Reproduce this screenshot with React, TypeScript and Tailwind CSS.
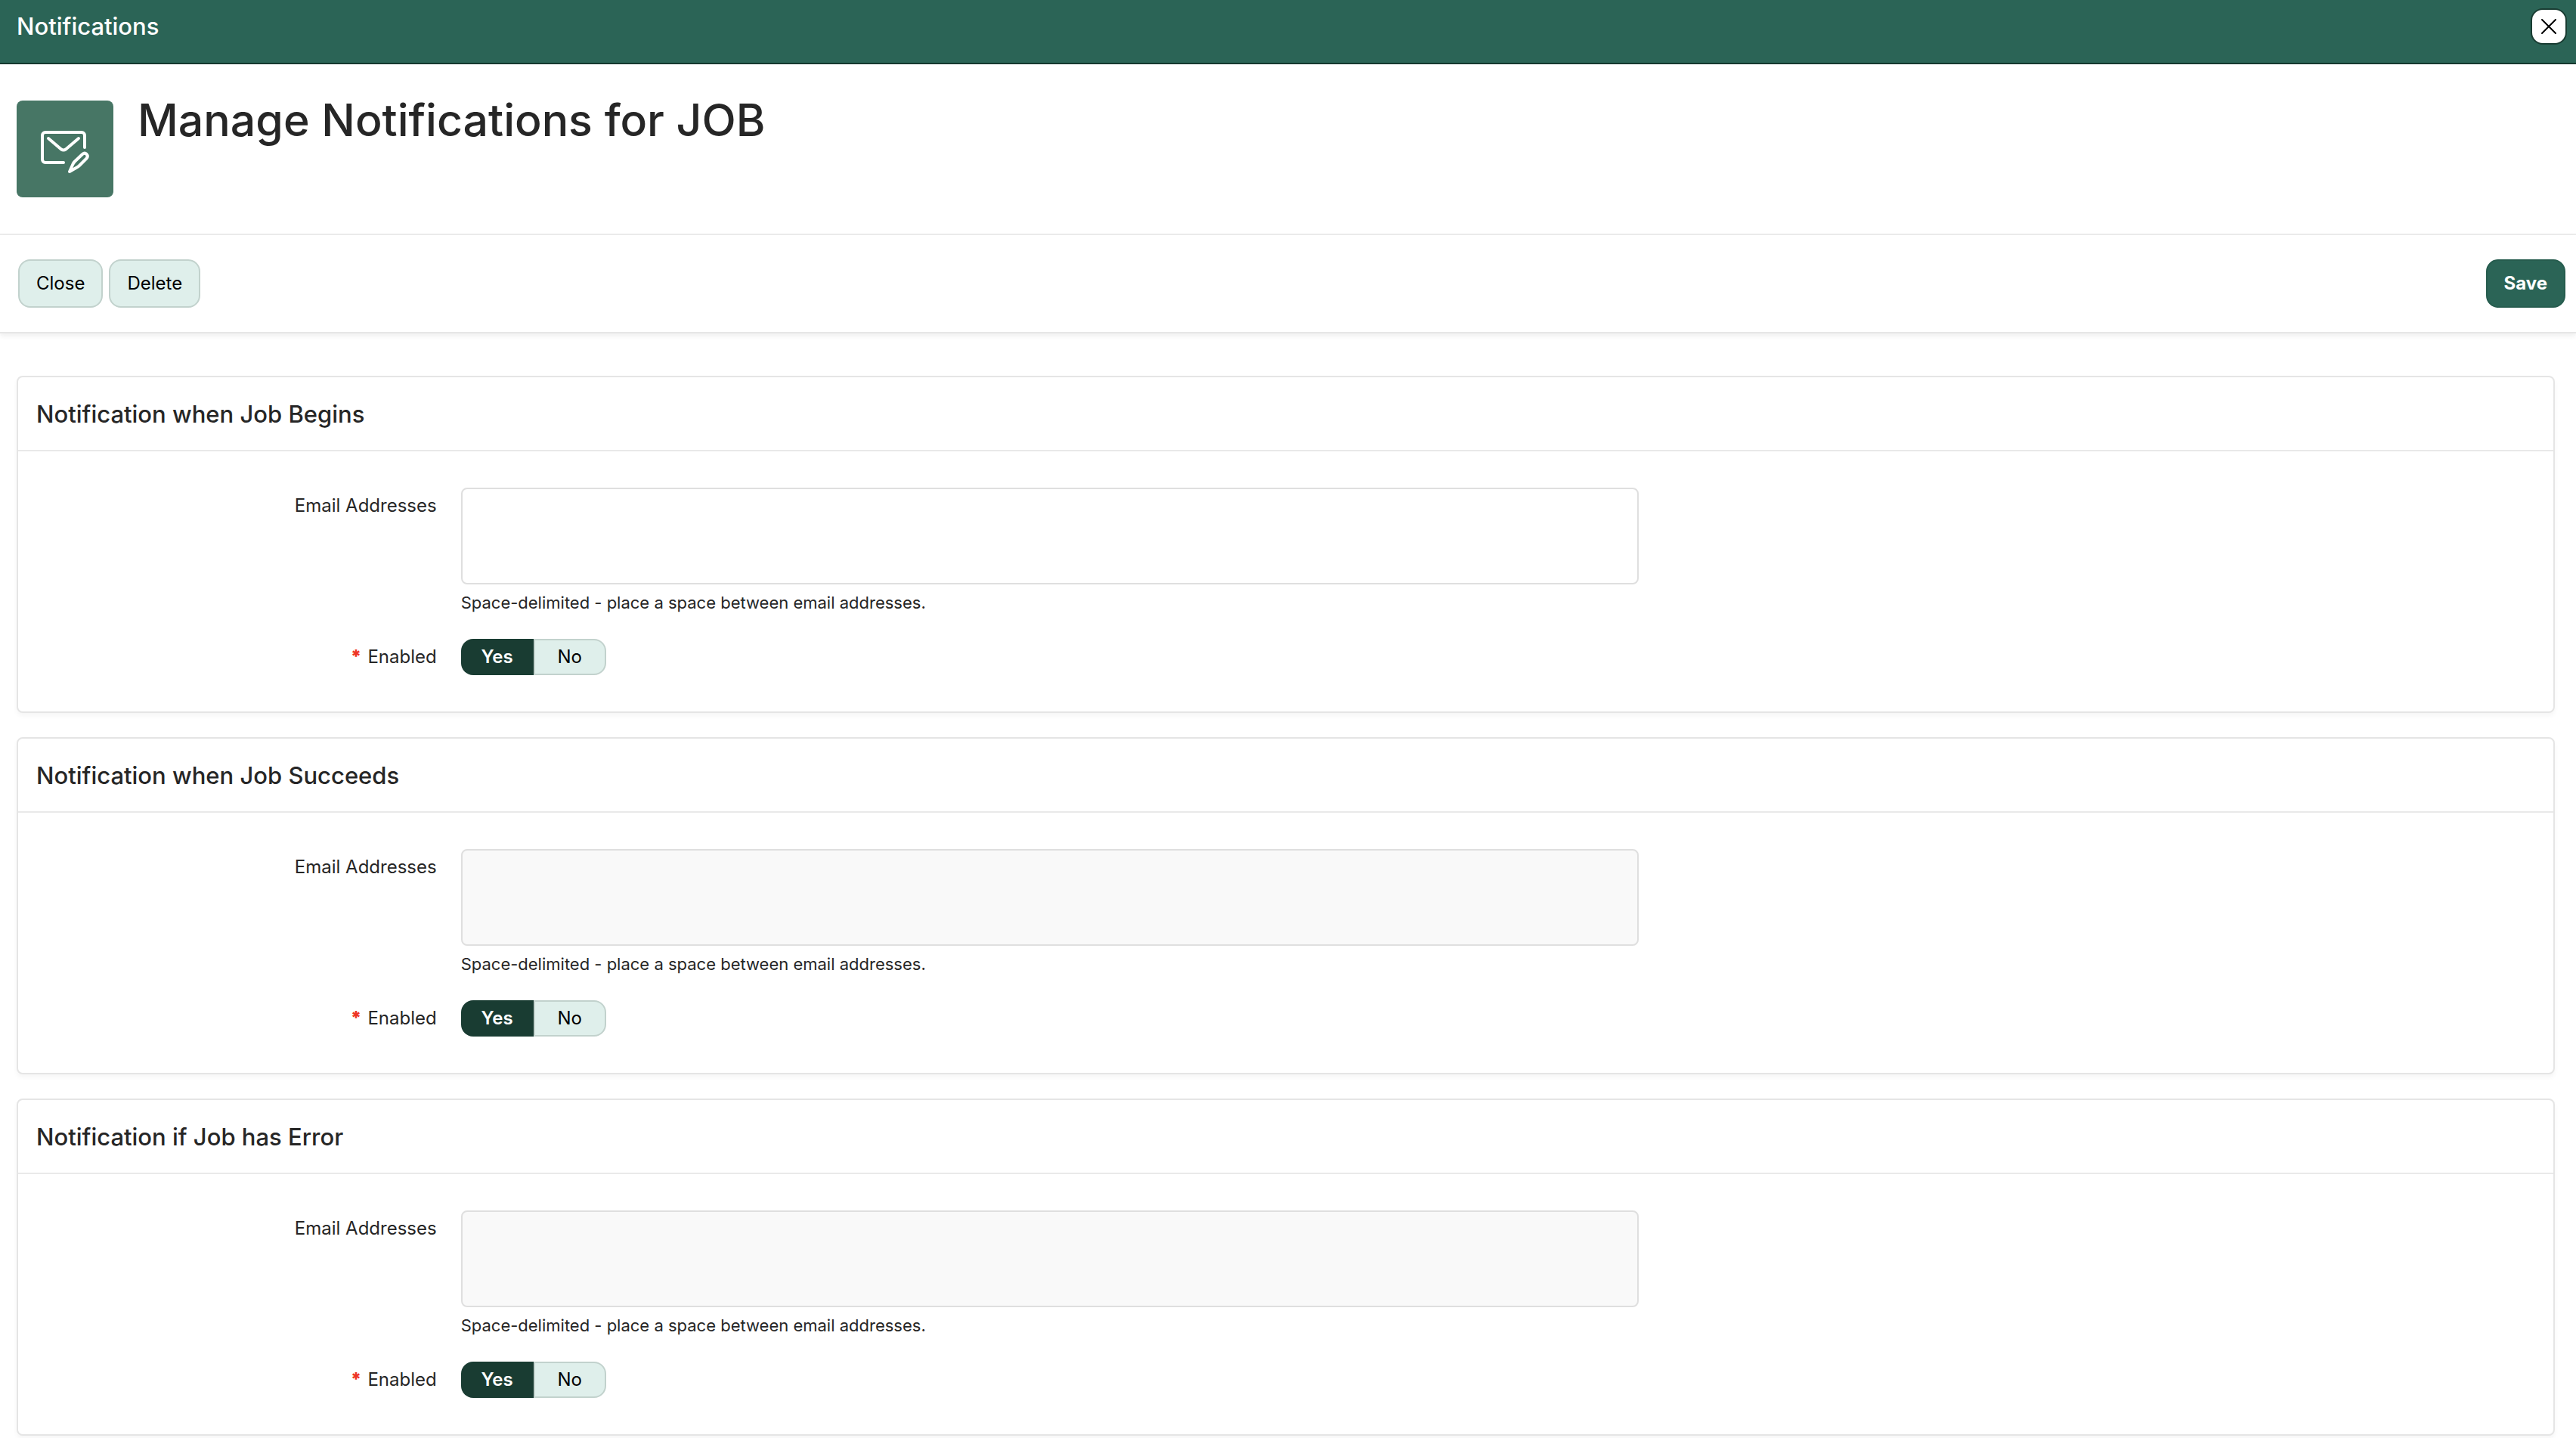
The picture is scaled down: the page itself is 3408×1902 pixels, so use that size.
import React from "react";

function EnvelopePenIcon() {
  return (
    <svg viewBox="0 0 128 128" className="size-32" fill="none" stroke="#fff" strokeWidth="4" strokeLinecap="round" strokeLinejoin="round" aria-hidden="true">
      <path d="M62 82H38a4 4 0 0 1-4-4V46a4 4 0 0 1 4-4h48a4 4 0 0 1 4 4v16" />
      <path d="M42 50l17 14.500q3 2 6 0L82 50" />
      <path d="M70 94l4.500-10q1-2 2.500-3.500l10-9.500q3-2.500 5.500-0.200 2.500 2.700 0 5.700L83 86q-1.500 1.500-3.500 2.500z" />
    </svg>
  );
}

type Section = { id: string; title: string; muted: boolean };

const sections: Section[] = [
  { id: "begins", title: "Notification when Job Begins", muted: false },
  { id: "succeeds", title: "Notification when Job Succeeds", muted: true },
  { id: "error", title: "Notification if Job has Error", muted: true },
];

function NotificationCard({ id, title, muted }: Section) {
  return (
    <section className="rounded-lg border-2 border-[#e5e5e5] bg-white shadow-[0_4px_6px_rgba(0,0,0,0.04)]">
      <h2 className="border-b-2 border-[#e9e9e9] px-6 pt-[25px] pb-[23px] text-[31px] leading-12 font-medium">{title}</h2>
      <div className="flex flex-col gap-6 px-4 py-12">
        <div className="flex">
          <label htmlFor={`${id}-emails`} className="w-1/6 pt-2 pr-4 text-right text-2xl">
            Email Addresses
          </label>
          <div className="flex-1 pl-4">
            <textarea
              id={`${id}-emails`}
              className={
                muted
                  ? "block h-32 w-full max-w-[1558px] resize-none rounded-lg border-2 border-[#dfdfdf] bg-[#f9f9f9] px-4 py-2 text-2xl"
                  : "block h-32 w-full max-w-[1558px] resize-none rounded-lg border-2 border-[#dfdfdf] bg-white px-4 py-2 text-2xl"
              }
            />
            <p className="py-2 text-[22px] leading-8">Space-delimited - place a space between email addresses.</p>
          </div>
        </div>
        <div className="flex">
          <span id={`${id}-enabled`} className="w-1/6 pt-2 pr-4 text-right text-2xl">
            <span className="mr-2 font-black text-[#ee3524]">*</span>
            Enabled
          </span>
          <div className="flex-1 pl-4">
            <div role="radiogroup" aria-labelledby={`${id}-enabled`} className="flex">
              <label className="flex h-12 w-24 items-center justify-center rounded-l-2xl bg-[#193c32] text-2xl font-semibold text-white">
                <input type="radio" name={`${id}-enabled`} value="Y" defaultChecked className="sr-only" />
                Yes
              </label>
              <label className="flex h-12 w-24 items-center justify-center rounded-r-2xl border-2 border-[#c2d2cd] bg-[#dfefeb] text-2xl text-black">
                <input type="radio" name={`${id}-enabled`} value="N" className="sr-only" />
                No
              </label>
            </div>
          </div>
        </div>
      </div>
    </section>
  );
}

export default function App() {
  return (
    <div className="min-h-screen bg-white font-[Inter,'Liberation_Sans',sans-serif] text-[#262626]">
      <header className="flex items-start justify-between border-b-2 border-[#16382e] bg-[#2b6456] pt-[11px] pr-3 pb-6 pl-[22px]">
        <span className="text-[31px] leading-12 font-medium text-white">Notifications</span>
        <button type="button" aria-label="Close dialog" className="flex size-12 items-center justify-center rounded-2xl border-2 border-[#193c32] bg-white text-black">
          <svg viewBox="0 0 24 24" className="size-6" fill="none" stroke="currentColor" strokeWidth="2" strokeLinecap="round" aria-hidden="true">
            <path d="M3 3l18 18M21 3L3 21" />
          </svg>
        </button>
      </header>

      <div className="flex gap-8 border-b-2 border-[#ebebeb] px-[22px] py-12">
        <div className="size-32 shrink-0 rounded-lg bg-[#477665]">
          <EnvelopePenIcon />
        </div>
        <h1 className="text-[59px] leading-[52px] font-medium">Manage Notifications for JOB</h1>
      </div>

      <div className="flex gap-2 border-b-2 border-[#e6e6e6] py-8 pr-[14px] pl-6 shadow-[0_4px_6px_rgba(0,0,0,0.06)]">
        <button type="button" className="h-16 rounded-2xl border-2 border-[#c2d2cd] bg-[#dfefeb] px-[22px] text-2xl text-black">Close</button>
        <button type="button" className="h-16 rounded-2xl border-2 border-[#c2d2cd] bg-[#dfefeb] px-[22px] text-2xl text-black">Delete</button>
        <button type="button" className="ml-auto h-16 rounded-2xl border-2 border-[#265c4e] bg-[#2b6456] px-[22px] text-2xl font-bold text-white">Save</button>
      </div>

      <main className="flex flex-col gap-8 pt-14 pr-7 pl-[22px]">
        {sections.map((s) => (
          <NotificationCard key={s.id} {...s} />
        ))}
      </main>
    </div>
  );
}
